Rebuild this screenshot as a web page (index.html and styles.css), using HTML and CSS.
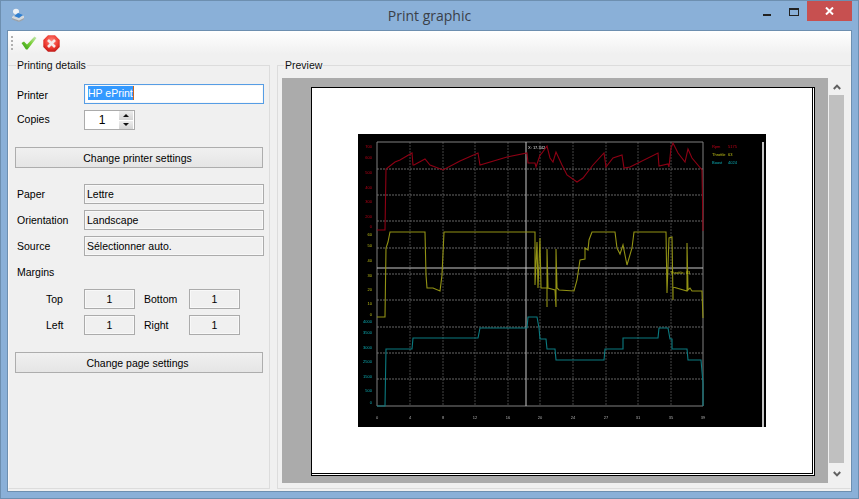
FILE: index.html
```html
<!doctype html>
<html>
  <head>
    <meta charset="utf-8">
    <title>Print graphic</title>
    <link rel="stylesheet" href="styles.css">
  </head>
  <body>
    <div class="window">

      <div class="titlebar">
        <svg class="app-icon" width="14" height="14" viewBox="0 0 14 14">
          <ellipse cx="5" cy="3.5" rx="3" ry="2.8" fill="#eef2f6"/>
          <path d="M1 9 L5 5.5 L13 8 L13 11 L8 13.5 L1 11 Z" fill="#d4d8dc"/>
          <path d="M3 8 L7 5 L12 7 L8 10 Z" fill="#2f7fd0"/>
          <path d="M1 10 L8 12.5 L13 10 L13 11.5 L8 14 L1 11.5 Z" fill="#9aa2aa"/>
        </svg>
        <div class="title">Print graphic</div>
        <div class="caption">
          <svg class="cap-min" width="8" height="2"><rect width="8" height="2" fill="#222"/></svg>
          <svg class="cap-max" width="10" height="8"><rect x=".5" y=".5" width="9" height="7" fill="none" stroke="#222"/><rect x="0" y="0" width="10" height="2" fill="#222"/></svg>
          <div class="cap-close">
            <svg width="9" height="8" viewBox="0 0 9 8"><path d="M1 .5 L8 7.5 M8 .5 L1 7.5" stroke="#fff" stroke-width="2"/></svg>
          </div>
        </div>
      </div>

      <div class="client">
        <div class="toolbar">
          <div class="gripper"><i></i><i></i><i></i><i></i></div>
          <svg class="tool-ok" width="16" height="14" viewBox="0 0 16 14">
            <defs>
              <linearGradient id="okfill" x1="0" y1="1" x2="1" y2="0">
                <stop offset="0" stop-color="#2f9a10"/>
                <stop offset="0.55" stop-color="#7cd03a"/>
                <stop offset="1" stop-color="#c8e8b8"/>
              </linearGradient>
            </defs>
            <path d="M0.5 7 L3 5.5 L6 8.5 L13.5 0.5 L15.5 2 L6.5 13.5 L5 13.5 Z" fill="url(#okfill)"/>
          </svg>
          <svg class="tool-cancel" width="17" height="17" viewBox="0 0 17 17">
            <defs>
              <radialGradient id="nofill" cx="0.5" cy="0.35" r="0.7">
                <stop offset="0" stop-color="#ff8a80"/>
                <stop offset="0.6" stop-color="#ee3a30"/>
                <stop offset="1" stop-color="#b81414"/>
              </radialGradient>
            </defs>
            <path d="M5 .3 H12 L16.7 5 V12 L12 16.7 H5 L.3 12 V5 Z" fill="url(#nofill)"/>
            <path d="M5 5 L12 12 M12 5 L5 12" stroke="#f6eaea" stroke-width="2.6"/>
          </svg>
        </div>

        <div class="panels">
          <fieldset class="group details">
            <legend>Printing details</legend>

            <div class="rows">
              <label class="nudge-down">Printer</label>
              <div class="field focused"><span class="selected">HP ePrint</span></div>
              <label class="nudge-up">Copies</label>
              <div class="spin">
                <span class="spin-value">1</span>
                <div class="spin-btns">
                  <div class="spin-btn"><i class="arrow-up"></i></div>
                  <div class="spin-btn"><i class="arrow-down"></i></div>
                </div>
              </div>
            </div>

            <button class="btn first-btn">Change printer settings</button>

            <div class="rows paper-rows">
              <label>Paper</label>
              <div class="field">Lettre</div>
              <label>Orientation</label>
              <div class="field">Landscape</div>
              <label>Source</label>
              <div class="field">Sélectionner auto.</div>
            </div>

            <div class="margins-title">Margins</div>
            <div class="margins">
              <label class="m-left">Top</label>
              <div class="field center">1</div>
              <label class="m-right">Bottom</label>
              <div class="field center">1</div>
              <label class="m-left">Left</label>
              <div class="field center">1</div>
              <label class="m-right">Right</label>
              <div class="field center">1</div>
            </div>

            <button class="btn second-btn">Change page settings</button>
          </fieldset>

          <fieldset class="group preview">
            <legend>Preview</legend>
            <div class="preview-inner">
              <div class="canvas">
                <div class="page">
                  <svg class="chart" width="408" height="293" viewBox="358 134 408 293">
                    <rect x="358" y="134" width="408" height="293" fill="#000"/>

                    <g class="grid-v">
                      <path d="M410 142V406 M443 142V406 M475 142V406 M508 142V406 M540 142V406 M573 142V406 M606 142V406 M638 142V406 M671 142V406"/>
                    </g>
                    <g class="grid-h">
                      <path d="M377 169H703 M377 195H703 M377 221H703 M377 248H703 M377 274H703 M377 300H703 M377 327H703 M377 353H703 M377 379H703"/>
                    </g>
                    <path class="axis" d="M377 142H703V406H377Z"/>
                    <path class="cursor" d="M526 142V406 M377 268H703"/>
                    <path class="scale" d="M763 142V427"/>

                    <polyline class="line-red" points="377,230 385,230 386,169 395,162 400,160 412,153 413,165 414,165 425,159 430,165 443,170 460,161 478,153 480,165 507,157 527,153 528,163 535,163 536,167 540,155 542,153 547,146 550,158 553,162 556,152 562,165 567,175 577,182 583,178 593,165 604,153 606,167 613,158 622,155 624,168 630,167 658,153 659,166 668,164 669,167 671,148 673,143 678,153 685,162 688,149 692,158 702,170 703,231"/>
                    <polyline class="line-yellow" points="377,317 385,317 386,248 388,242 390,232 425,232 426,275 427,288 433,288 440,291 442,275 444,232 447,232 535,232 535,285 537,242 538,288 540,238 541,288 547,288 547,307 547,249 548,288 555,290 556,307 556,249 557,288 559,290 574,291 577,280 580,260 585,259 585,248 588,250 589,240 592,232 615,232 617,248 620,254 623,245 627,265 632,248 634,232 666,232 667,293 669,238 672,237 673,300 673,287 687,291 687,243 688,290 690,288 692,291 702,291 703,318"/>
                    <polyline class="line-teal" points="377,406 385,406 386,349 412,349 413,338 478,338 480,328 527,328 528,317 537,317 539,328 540,339 546,339 547,349 555,349 556,360 604,360 605,349 623,349 623,338 658,338 659,328 668,328 670,339 672,339 672,349 687,349 688,360 701,360 703,383 703,406"/>

                    <g class="ticks red">
                      <text x="372" y="148">700</text><text x="372" y="159">600</text><text x="372" y="174">500</text><text x="372" y="189">400</text><text x="372" y="203">300</text><text x="372" y="218">200</text><text x="372" y="228">0</text>
                    </g>
                    <g class="ticks yellow">
                      <text x="372" y="235.5">60</text><text x="372" y="247">50</text><text x="372" y="262">40</text><text x="372" y="277">30</text><text x="372" y="291">20</text><text x="372" y="305">10</text><text x="372" y="316">0</text>
                    </g>
                    <g class="ticks teal">
                      <text x="372" y="323">4000</text><text x="372" y="334">3500</text><text x="372" y="349">3000</text><text x="372" y="363">2500</text><text x="372" y="378">1500</text><text x="372" y="392">500</text><text x="372" y="404">0</text>
                    </g>
                    <g class="ticks-x">
                      <text x="377" y="419">0</text><text x="410" y="419">4</text><text x="443" y="419">8</text><text x="475" y="419">12</text><text x="508" y="419">16</text><text x="540" y="419">20</text><text x="573" y="419">24</text><text x="606" y="419">27</text><text x="638" y="419">31</text><text x="671" y="419">35</text><text x="703" y="419">39</text>
                    </g>

                    <text class="legend-red" x="712" y="147.5">Rpm</text><text class="legend-red" x="728" y="147.5">5175</text>
                    <text class="legend-yellow" x="712" y="155.5">Throttle</text><text class="legend-yellow" x="728" y="155.5">63</text>
                    <text class="legend-teal" x="712" y="164">Boost</text><text class="legend-teal" x="728" y="164">4024</text>
                    <text class="cursor-label" x="528" y="149">X: 17.342</text>
                    <text class="legend-yellow" x="670" y="274">Throttle: 63</text>
                  </svg>
                </div>
              </div>
              <div class="scrollbar">
                <svg class="sb-arrow" width="8" height="6" viewBox="0 0 8 6"><path d="M.8 5 L4 1.6 L7.2 5" fill="none" stroke="#606060" stroke-width="2"/></svg>
                <div class="sb-thumb"></div>
                <svg class="sb-arrow" width="8" height="6" viewBox="0 0 8 6"><path d="M.8 1 L4 4.4 L7.2 1" fill="none" stroke="#606060" stroke-width="2"/></svg>
              </div>
            </div>
          </fieldset>
        </div>
      </div>
    </div>
  </body>
</html>
```

FILE: styles.css
```css
html, body {
  margin: 0;
  padding: 0;
}

.window {
  box-sizing: border-box;
  width: 859px;
  height: 499px;
  padding: 0 6px 6px 6px;
  background: #8ab0d8;
  border: 1px solid #6d8fb0;
  font-family: "Liberation Sans", Arial, sans-serif;
  font-size: 10.5px;
  color: #000;
  display: flex;
  flex-direction: column;
}

/* title bar */
.titlebar {
  height: 29px;
  position: relative;
  display: flex;
  justify-content: center;
  flex: none;
}
.app-icon {
  position: absolute;
  left: 4px;
  top: 7px;
}
.title {
  font-family: "Open Sans", sans-serif;
  font-size: 14px;
  line-height: 29px;
  color: #3a4048;
}
.caption {
  position: absolute;
  right: 0;
  top: 0;
  display: flex;
  align-items: flex-start;
}
.cap-min {
  margin: 13px 18px 0 0;
}
.cap-max {
  margin: 7px 8px 0 0;
}
.cap-close {
  width: 45px;
  height: 20px;
  background: #c75050;
  display: flex;
  align-items: center;
  justify-content: center;
}

/* client area */
.client {
  flex: 1;
  min-height: 0;
  display: flex;
  flex-direction: column;
  background: #f0f0f0;
  border: 1px solid #6d8fb0;
}

.toolbar {
  height: 23px;
  flex: none;
  display: flex;
  align-items: center;
  padding-left: 3px;
  background: linear-gradient(#ffffff, #f0f0f0);
}
.gripper {
  display: flex;
  flex-direction: column;
  gap: 2px;
  margin-right: 8px;
}
.gripper i {
  display: block;
  width: 2px;
  height: 2px;
  background: #b0b0b0;
}
.tool-ok {
  margin: 1px 6px 0 0;
}
.tool-cancel {
  margin-top: 1px;
}

.panels {
  flex: 1;
  min-height: 0;
  display: flex;
  gap: 7px;
  padding: 5px 0 2px 0;
}

.group {
  box-sizing: border-box;
  margin: 0;
  min-width: 0;
  border: 1px solid #dcdcdc;
  border-radius: 0;
}
.group legend {
  padding: 0 1px;
  line-height: 13px;
  color: #111;
}

/* left panel */
.details {
  width: 262px;
  flex: none;
  padding: 12px 0 0 6px;
  border-left-color: #f8f8f8;
}
.details legend {
  margin-left: 1px;
}

.rows {
  display: grid;
  grid-template-columns: 69px 180px;
  grid-auto-rows: 20px;
  row-gap: 6px;
  align-items: center;
}
.rows label {
  padding-left: 2px;
}
.rows .nudge-down {
  padding-top: 2px;
}
.rows .nudge-up {
  padding-bottom: 2px;
}

.field {
  box-sizing: border-box;
  height: 20px;
  line-height: 18px;
  padding-left: 2px;
  border: 1px solid #ababab;
  box-shadow: inset 0 0 0 1px #f8f8f8;
}
.field.center {
  text-align: center;
  padding-left: 0;
}
.field.focused {
  background: #fff;
  border-color: #569de5;
  padding-left: 3px;
}
.selected {
  display: inline-block;
  height: 14px;
  line-height: 14px;
  background: #3399ff;
  color: #fff;
  border-right: 1px solid #c8641e;
  vertical-align: 1px;
}

.spin {
  box-sizing: border-box;
  width: 51px;
  height: 20px;
  background: #fff;
  border: 1px solid #ababab;
  display: flex;
  justify-content: space-between;
}
.spin-value {
  flex: 1;
  text-align: center;
  line-height: 18px;
  font-size: 12px;
}
.spin-btns {
  width: 14px;
  margin-right: 1px;
  display: flex;
  flex-direction: column;
  gap: 1px;
}
.spin-btn {
  flex: 1;
  background: linear-gradient(#ececec, #d4d4d4);
  display: flex;
  align-items: center;
  justify-content: center;
}
.arrow-up,
.arrow-down {
  width: 0;
  height: 0;
  border-left: 3px solid transparent;
  border-right: 3px solid transparent;
}
.arrow-up {
  border-bottom: 3px solid #111;
}
.arrow-down {
  border-top: 3px solid #111;
}

.btn {
  display: block;
  box-sizing: border-box;
  width: 248px;
  height: 21px;
  padding: 0 3px 0 0;
  font: inherit;
  color: #000;
  background: linear-gradient(#f0f0f0, #e5e5e5);
  border: 1px solid #adadad;
  border-radius: 0;
}
.first-btn {
  margin-top: 17px;
}
.second-btn {
  margin-top: 17px;
}

.paper-rows {
  margin-top: 16px;
}

.margins-title {
  margin-top: 10px;
  padding-left: 2px;
  line-height: 13px;
}

.margins {
  margin-top: 10px;
  display: grid;
  grid-template-columns: 69px 51px 54px 51px;
  grid-auto-rows: 20px;
  row-gap: 6px;
  align-items: center;
}
.m-left {
  padding-left: 31px;
}
.m-right {
  padding-left: 9px;
}

/* right panel */
.preview {
  flex: 1;
  padding: 6px 0 5px 4px;
  border-right-color: #f4f4f4;
}
.preview legend {
  margin-left: 2px;
}

.preview-inner {
  height: 405px;
  display: flex;
}

.canvas {
  box-sizing: border-box;
  width: 546px;
  height: 405px;
  flex: none;
  padding: 9px 0 0 29px;
  background: #ababab;
}

.page {
  box-sizing: border-box;
  width: 504px;
  height: 389px;
  padding: 46px 0 0 46px;
  background: #fff;
  border: 1px solid #000;
  box-shadow: inset -1px -1px 0 #fff, inset -2px -2px 0 #000;
}

.chart {
  display: block;
  filter: blur(0.6px);
}
.grid-v path {
  stroke: #444;
  stroke-width: 1;
  stroke-dasharray: 2 1;
  fill: none;
}
.grid-h path {
  stroke: #666;
  stroke-width: 1;
  stroke-dasharray: 2 1;
  fill: none;
}
.axis {
  stroke: #808080;
  stroke-width: 1;
  fill: none;
}
.cursor {
  stroke: #c8c8c8;
  stroke-width: 1;
  fill: none;
}
.scale {
  stroke: #c4c4c4;
  stroke-width: 2;
  fill: none;
}
.line-red,
.line-yellow,
.line-teal {
  fill: none;
  stroke-width: 1.1;
}
.line-red {
  stroke: #8e0014;
}
.line-yellow {
  stroke: #929214;
}
.line-teal {
  stroke: #0b7a80;
}

.chart text {
  font-family: "Liberation Sans", Arial, sans-serif;
  font-size: 4px;
}
.ticks text {
  text-anchor: end;
}
.ticks.red text,
.legend-red {
  fill: #c00018;
}
.ticks.yellow text,
.legend-yellow {
  fill: #c0c018;
}
.ticks.teal text,
.legend-teal {
  fill: #0db0b8;
}
.ticks-x text {
  text-anchor: middle;
  fill: #b0b0b0;
}
.cursor-label {
  fill: #e0e0e0;
}

.scrollbar {
  width: 17px;
  margin-left: 1px;
  flex: none;
  height: 405px;
  display: flex;
  flex-direction: column;
  align-items: center;
}
.sb-arrow {
  display: block;
  flex: none;
  margin-left: -2px;
}
.sb-arrow:first-child {
  margin-top: 6px;
  margin-bottom: 5px;
}
.sb-arrow:last-child {
  margin-top: 8px;
}
.sb-thumb {
  width: 15px;
  height: 368px;
  flex: none;
  margin-right: 2px;
  background: #c0c0c0;
}
```
